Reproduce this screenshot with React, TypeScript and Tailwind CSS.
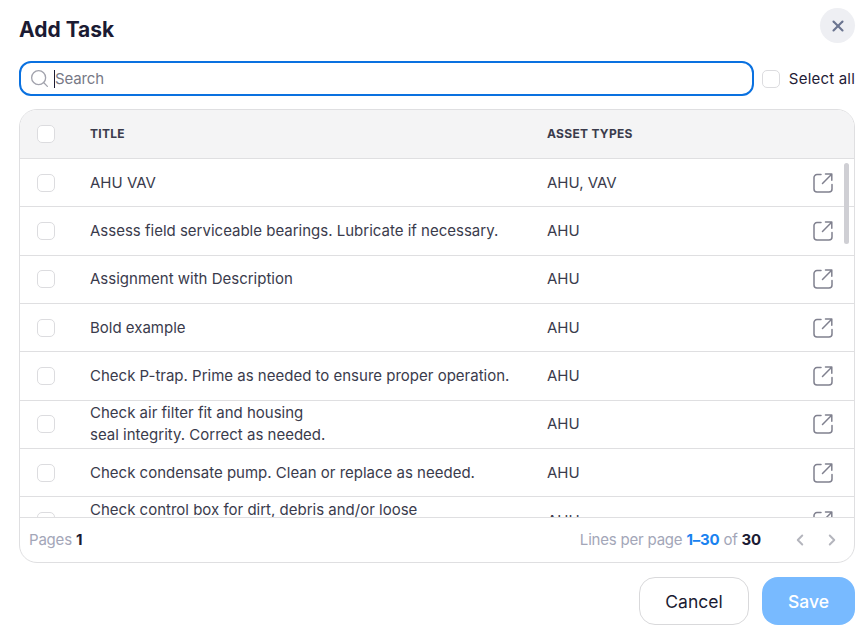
import { ChevronLeft, ChevronRight, Search, X } from "lucide-react";

const rows = [
  { title: ["AHU VAV"], types: "AHU, VAV" },
  { title: ["Assess field serviceable bearings. Lubricate if necessary."], types: "AHU" },
  { title: ["Assignment with Description"], types: "AHU" },
  { title: ["Bold example"], types: "AHU" },
  { title: ["Check P-trap. Prime as needed to ensure proper operation."], types: "AHU" },
  { title: ["Check air filter fit and housing", "seal integrity. Correct as needed."], types: "AHU" },
  { title: ["Check condensate pump. Clean or replace as needed."], types: "AHU" },
  { title: ["Check control box for dirt, debris and/or loose", "\u00a0"], types: "AHU" },
];

const Box = () => (
  <span className="block h-[18px] w-[18px] rounded-[5px] border border-[#dcdcdf] bg-white" />
);

const OpenIcon = () => (
  <svg width="20" height="20" viewBox="0 0 20 20" fill="none" stroke="#80818f" strokeWidth="1.5" strokeLinecap="round" strokeLinejoin="round">
    <path d="M8 1.6H4a3 3 0 0 0-3 3V16a3 3 0 0 0 3 3h12a3 3 0 0 0 3-3v-4.5" />
    <path d="M9.5 10.5 18.4 1.4M12.5 1h6.3v6.2" />
  </svg>
);

export default function App() {
  return (
    <div className="flex h-[628px] w-[863px] flex-col overflow-hidden bg-white pl-[19px] pr-2 font-['Inter',sans-serif] text-[#3a3b4c]">
      <div className="flex h-[61px] items-start justify-between">
        <h1 className="mt-[16px] text-[21px] leading-[28px] font-bold text-[#1b1b33]">Add Task</h1>
        <button className="mt-2 flex h-[35px] w-[35px] items-center justify-center rounded-full bg-[#eeeff3] text-[#6b7590]">
          <X size={18} strokeWidth={2.8} />
        </button>
      </div>

      <div className="flex h-[35px] items-center">
        <div className="flex h-[35px] w-[735px] items-center rounded-xl border-2 border-[#0a71e0] pl-2">
          <Search size={21} strokeWidth={1.5} className="text-[#a2a3ad]" />
          <span className="ml-[4px] h-[18px] w-px bg-[#1b1b33]" />
          <span className="mt-px text-[15px] tracking-[-0.15px] text-[#777986]">Search</span>
        </div>
        <span className="ml-2"><Box /></span>
        <span className="mt-px ml-[9px] text-[15px] tracking-[0.2px] whitespace-nowrap text-[#1f2036]">Select all</span>
      </div>

      <div className="relative mt-[13px] flex h-[454px] w-[836px] flex-col overflow-hidden rounded-[18px] border border-[#dfdfe1]">
        <div className="flex h-[49px] shrink-0 items-center border-b border-[#dfdfe1] bg-[#f4f4f5] text-[12px] font-bold tracking-[0.3px] text-[#3a3b4c]">
          <span className="ml-[17px] w-[53px]"><Box /></span>
          <span className="w-[457px]">TITLE</span>
          <span>ASSET TYPES</span>
        </div>

        <div className="h-[358px] shrink-0 overflow-hidden">
          {rows.map((row) => (
            <div key={row.title[0]} className="flex h-[48.35px] items-center border-b border-[#dfdfe1] text-[15px] leading-[22px]">
              <span className="ml-[17px] w-[53px] shrink-0"><Box /></span>
              <div className="w-[457px] shrink-0">
                {row.title.map((line) => (
                  <div key={line}>{line}</div>
                ))}
              </div>
              <span className="w-[266px] shrink-0">{row.types}</span>
              <OpenIcon />
            </div>
          ))}
        </div>

        <div className="absolute top-[53px] right-[5px] h-[81px] w-[5px] rounded-full bg-[#cfcfd4]" />

        <div className="flex flex-1 items-center justify-between border-t border-[#dfdfe1] pr-[13px] pl-[9px] text-[15px] tracking-[-0.2px]">
          <div className="text-[#a3a6b8]">
            Pages <span className="font-bold text-[#1b1b33]">1</span>
          </div>
          <div className="flex items-center">
            <span className="text-[#a3a6b8]">
              Lines per page <span className="font-bold text-[#1a82f0]">1–30</span> of{" "}
              <span className="font-bold text-[#1b1b33]">30</span>
            </span>
            <ChevronLeft size={18} strokeWidth={2.6} className="ml-[30px] text-[#b4b5bd]" />
            <ChevronRight size={18} strokeWidth={2.6} className="ml-[14px] text-[#b4b5bd]" />
          </div>
        </div>
      </div>

      <div className="mt-[14px] flex w-[836px] justify-end gap-[13px]">
        <button className="h-[48px] w-[110px] rounded-2xl border border-[#d9d9db] bg-white pt-[3px] text-[17.5px] text-[#1b1b33]">Cancel</button>
        <button className="h-[48px] w-[93px] rounded-2xl bg-[#78baff] pt-[3px] text-[17.5px] font-medium text-white">Save</button>
      </div>
    </div>
  );
}
